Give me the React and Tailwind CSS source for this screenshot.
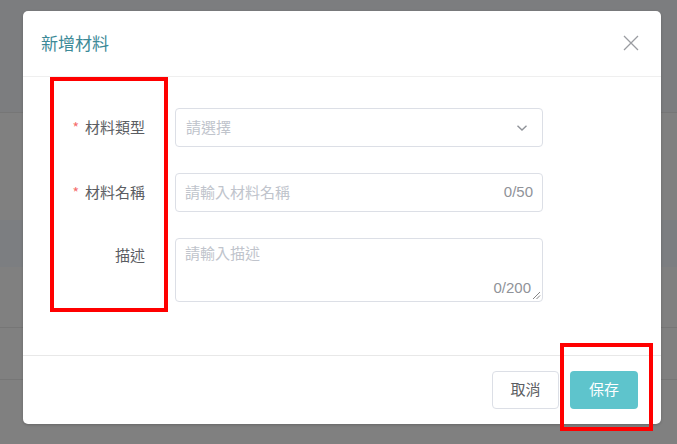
import React from "react";

const font = { fontFamily: '"Noto Sans CJK TC", "Noto Sans", sans-serif' };
const digits = { fontFamily: '"Liberation Sans", Arial, sans-serif' };

function Label({ required, children }) {
  return (
    <div className="w-[152px] shrink-0 pr-[30px] flex items-center justify-end text-[15px] text-[#5b5d62]">
      {required && <span className="mr-[6px] text-[#f56c6c] text-[14px]">*</span>}
      {children}
    </div>
  );
}

function Chevron() {
  return (
    <svg width="12" height="8" viewBox="0 0 12 8" fill="none">
      <path d="M1.5 1.8 L6 6 L10.5 1.8" stroke="#909399" strokeWidth="1.4" />
    </svg>
  );
}

export default function App() {
  return (
    <div className="relative w-[677px] h-[444px] overflow-hidden bg-[#808080]" style={font}>
      {/* page behind the mask */}
      <div className="flex flex-col">
        <div className="h-[113px] bg-[#7c7d7f] border-b border-[#767676]" />
        <div className="h-[107px]" />
        <div className="h-[47px] bg-[#7c7e81]" />
        <div className="h-[61px] border-b border-[#767676]" />
        <div className="h-[52px] border-b border-[#767676]" />
      </div>

      {/* dialog */}
      <div className="absolute left-[23px] top-[11px] w-[638px] h-[413px] bg-white rounded-[5px] shadow-[0_1px_3px_rgba(0,0,0,0.2)] flex flex-col">
        <div className="h-[66px] shrink-0 flex items-center justify-between pl-[18px] pr-[22px] pb-[2px] border-b border-[#efefef]">
          <span className="text-[17px] text-[#3d8a98]">新增材料</span>
          <svg width="16" height="16" viewBox="0 0 16 16" fill="none">
            <path d="M1 1 L15 15 M15 1 L1 15" stroke="#9a9ca1" strokeWidth="1.3" />
          </svg>
        </div>

        <div className="flex-1 flex flex-col gap-[26px] pt-[31px]">
          <div className="flex h-[39px]">
            <Label required>材料類型</Label>
            <div className="w-[368px] flex items-center justify-between border border-[#dcdfe6] rounded-[4px] pl-[10px] pr-[14px]">
              <span className="text-[15px] text-[#c0c4cc]">請選擇</span>
              <Chevron />
            </div>
          </div>
          <div className="flex h-[39px]">
            <Label required>材料名稱</Label>
            <div className="w-[368px] flex items-center justify-between border border-[#dcdfe6] rounded-[4px] pl-[9px] pr-[9px]">
              <span className="text-[15px] text-[#c0c4cc]">請輸入材料名稱</span>
              <span className="text-[15px] text-[#909399]" style={digits}>0/50</span>
            </div>
          </div>
          <div className="flex h-[64px]">
            <div className="w-[152px] shrink-0 pr-[30px] pt-[6px] flex justify-end text-[15px] text-[#5b5d62]">描述</div>
            <div className="relative w-[368px] border border-[#dcdfe6] rounded-[4px] pl-[9px] pt-[1px]">
              <span className="text-[15px] text-[#c0c4cc]">請輸入描述</span>
              <span className="absolute right-[11px] bottom-[2px] text-[15px] text-[#909399]" style={digits}>0/200</span>
              <svg className="absolute right-[1px] bottom-[1px]" width="10" height="10" viewBox="0 0 10 10" fill="none">
                <path d="M9 2 L2 9 M9 5.5 L5.5 9" stroke="#777" strokeWidth="0.9" />
              </svg>
            </div>
          </div>
        </div>

        <div className="h-[69px] shrink-0 border-t border-[#e8e8e8] flex items-center justify-end gap-[11px] pr-[23px] pb-[1px]">
          <button className="w-[67px] h-[38px] border border-[#dcdfe6] rounded-[4px] text-[15px] text-[#5b5d62] bg-white">
            取消
          </button>
          <button className="w-[68px] h-[38px] rounded-[4px] text-[15px] text-white bg-[#5ec4cc]">
            保存
          </button>
        </div>
      </div>

      {/* annotation boxes */}
      <div className="absolute left-[50px] top-[77px] w-[118px] h-[235px] border-4 border-[#ff0000]" />
      <div className="absolute left-[560px] top-[343px] w-[93px] h-[88px] border-4 border-[#ff0000]" />
    </div>
  );
}
